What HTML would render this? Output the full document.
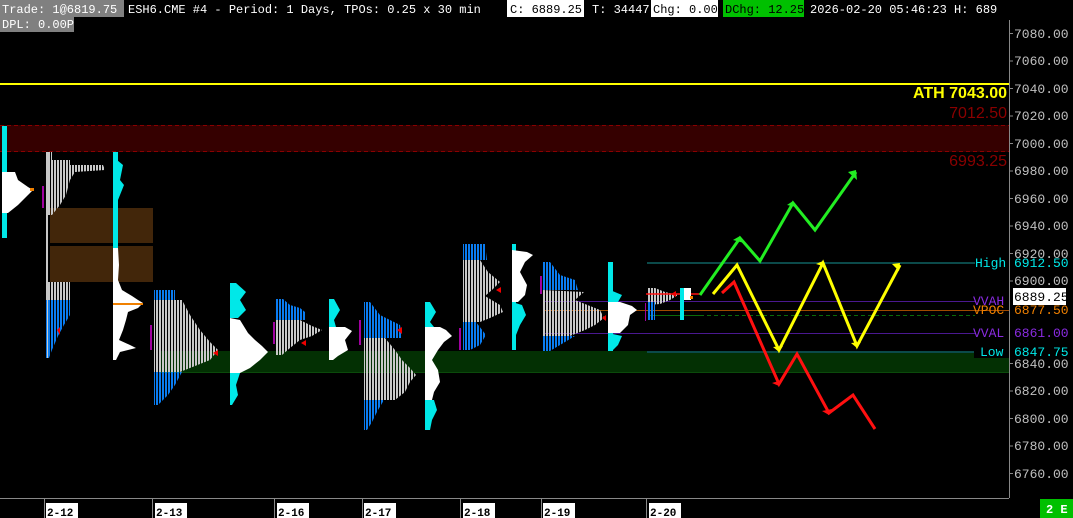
<!DOCTYPE html>
<html><head><meta charset="utf-8"><style>
html,body{margin:0;padding:0;background:#000;width:1073px;height:518px;overflow:hidden}
svg{display:block}
.m{font-family:"Liberation Mono",monospace;font-size:12px}
.a{font-family:"Liberation Mono",monospace;font-size:13px;fill:#c0c0c0}
.s{font-family:"Liberation Sans",sans-serif;font-size:16px}
</style></head><body>
<svg width="1073" height="518" viewBox="0 0 1073 518" xmlns="http://www.w3.org/2000/svg">
<defs>
<pattern id="g" width="3" height="10" patternUnits="userSpaceOnUse"><rect width="2" height="10" fill="#c8c8c8"/></pattern>
<pattern id="b" width="3" height="10" patternUnits="userSpaceOnUse"><rect width="2" height="10" fill="#0a7cf0"/></pattern>
</defs>
<rect width="1073" height="518" fill="#000"/>
<rect x="0" y="125" width="1009" height="27" fill="#350000"/>
<line x1="0" y1="125.5" x2="1009" y2="125.5" stroke="#8a0000" stroke-dasharray="4,3"/>
<line x1="0" y1="151.5" x2="1009" y2="151.5" stroke="#8a0000" stroke-dasharray="4,3"/>
<rect x="160" y="351" width="849" height="22" fill="#033003"/>
<line x1="160" y1="372.5" x2="1009" y2="372.5" stroke="#0b4a0b"/>
<rect x="50" y="208" width="103" height="35" fill="#42260a"/>
<rect x="50" y="246" width="103" height="36" fill="#42260a"/>
<line x1="0" y1="84" x2="1009" y2="84" stroke="#ffff00" stroke-width="2"/>
<line x1="647" y1="263" x2="975" y2="263" stroke="#0b4a4a" stroke-width="2"/>
<line x1="647" y1="352" x2="1009" y2="352" stroke="#0b4a4a" stroke-width="2"/>
<line x1="543" y1="301.5" x2="975" y2="301.5" stroke="#4a1890"/>
<line x1="543" y1="333.5" x2="975" y2="333.5" stroke="#4a1890"/>
<line x1="543" y1="310.5" x2="1009" y2="310.5" stroke="#a04a00"/>
<line x1="700" y1="315.5" x2="975" y2="315.5" stroke="#0a6a0a" stroke-dasharray="4,3"/>
<line x1="648" y1="315.5" x2="700" y2="315.5" stroke="#0a6a0a"/>
<rect x="2" y="126" width="5" height="112" fill="#00e8e8"/>
<polygon points="2,172 15,172 18,180 28,187 33,190 28,195 18,205 8,213 2,213" fill="#fff"/>
<rect x="30" y="188" width="4" height="3" fill="#f08000"/>
<rect x="46" y="152" width="2" height="206" fill="#c8c8c8"/>
<polygon points="46,152 52,152 52,160 70,160 70,165 103,165 105,170 75,172 70,180 66,195 60,205 52,215 46,215" fill="url(#g)"/>
<polygon points="46,282 70,282 70,300 46,300" fill="url(#g)"/>
<polygon points="46,300 70,300 70,315 64,325 58,336 52,350 49,358 46,358" fill="url(#b)"/>
<rect x="42" y="186" width="2" height="22" fill="#a000a0"/>
<polygon points="57,330 60,327 60,335" fill="#f00000"/>
<rect x="113" y="152" width="5" height="96" fill="#00e8e8"/>
<polygon points="117,160 123,165 120,180 124,185 118,200 115,210 117,220" fill="#00e8e8"/>
<polygon points="113,248 118,248 119,265 118,280 122,290 132,296 138,300 143,303 138,308 128,312 126,320 123,330 119,340 130,345 136,348 120,352 116,360 113,360" fill="#fff"/>
<line x1="113" y1="304" x2="143" y2="304" stroke="#f08000" stroke-width="2"/>
<polygon points="154,290 175,290 175,300 154,300" fill="url(#b)"/>
<polygon points="154,300 182,300 190,315 200,330 210,342 218,350 210,360 195,366 180,372 154,372" fill="url(#g)"/>
<polygon points="154,372 182,372 175,385 168,395 158,405 154,405" fill="url(#b)"/>
<rect x="150" y="325" width="2" height="25" fill="#a000a0"/>
<polygon points="213,353 218,350 218,356" fill="#f00000"/>
<polygon points="230,283 236,283 246,292 240,300 246,310 238,318 230,318" fill="#00e8e8"/>
<polygon points="230,318 240,320 248,333 255,340 262,346 268,352 260,360 250,368 240,373 230,373" fill="#fff"/>
<polygon points="230,373 240,373 236,385 238,395 232,405 230,405" fill="#00e8e8"/>
<polygon points="275,299 283,299 290,305 300,308 305,312 305,320 275,320" fill="url(#b)"/>
<polygon points="275,320 300,320 312,326 322,330 312,336 300,340 290,348 282,355 275,355" fill="url(#g)"/>
<rect x="273" y="322" width="2" height="22" fill="#a000a0"/>
<polygon points="301,343 306,340 306,346" fill="#f00000"/>
<polygon points="329,299 334,299 340,310 334,320 336,327 329,327" fill="#00e8e8"/>
<polygon points="329,327 345,327 352,331 345,340 348,350 338,356 333,360 329,360" fill="#fff"/>
<polygon points="364,302 370,302 380,315 390,320 400,325 402,338 364,338" fill="url(#b)"/>
<polygon points="364,338 385,338 395,350 402,360 410,368 416,375 410,382 405,392 395,400 364,400" fill="url(#g)"/>
<polygon points="364,400 384,400 378,410 372,422 367,430 364,430" fill="url(#b)"/>
<rect x="359" y="320" width="2" height="25" fill="#a000a0"/>
<polygon points="397,330 402,327 402,334" fill="#f00000"/>
<polygon points="425,302 430,302 436,312 430,322 434,327 425,327" fill="#00e8e8"/>
<polygon points="425,327 440,327 446,330 452,336 444,342 438,350 432,360 438,370 440,382 434,392 432,400 425,400" fill="#fff"/>
<polygon points="425,400 434,400 437,410 432,420 430,430 425,430" fill="#00e8e8"/>
<polygon points="463,244 485,244 487,260 463,260" fill="url(#b)"/>
<polygon points="463,260 480,260 488,272 500,282 492,290 485,296 500,305 503,312 490,318 480,322 463,322" fill="url(#g)"/>
<polygon points="463,322 476,322 486,335 480,345 470,350 463,350" fill="url(#b)"/>
<rect x="459" y="328" width="2" height="22" fill="#a000a0"/>
<polygon points="496,290 501,287 501,293" fill="#f00000"/>
<rect x="512" y="244" width="4" height="106" fill="#00e8e8"/>
<polygon points="512,250 527,252 533,255 525,262 520,272 527,285 525,295 518,302 512,302" fill="#fff"/>
<polygon points="512,302 522,305 526,315 520,325 516,335 516,350 512,350" fill="#00e8e8"/>
<polygon points="543,262 550,262 560,275 575,280 578,290 543,290" fill="url(#b)"/>
<polygon points="543,290 584,292 575,300 585,304 600,310 604,318 595,325 585,330 570,336 543,336" fill="url(#g)"/>
<polygon points="543,336 575,336 565,342 550,351 543,351" fill="url(#b)"/>
<rect x="540" y="276" width="2" height="18" fill="#a000a0"/>
<polygon points="602,318 606,315 606,321" fill="#f00000"/>
<rect x="608" y="262" width="5" height="89" fill="#00e8e8"/>
<polygon points="610,290 622,295 618,302 610,302" fill="#00e8e8"/>
<polygon points="608,302 620,302 632,306 637,310 630,315 628,325 620,333 608,333" fill="#fff"/>
<polygon points="608,333 622,336 618,345 612,351 608,351" fill="#00e8e8"/>
<polygon points="648,288 655,288 665,292 678,295 670,300 660,304 648,305" fill="url(#g)"/>
<rect x="648" y="302" width="7" height="18" fill="url(#b)"/>
<rect x="645" y="303" width="1" height="18" fill="#a000a0"/>
<line x1="646" y1="294" x2="700" y2="294" stroke="#ff1010" stroke-width="1.5"/>
<polygon points="671,294 676,291 676,297" fill="#f00000"/>
<rect x="680" y="288" width="4" height="32" fill="#00e8e8"/>
<rect x="684" y="288" width="7" height="12" fill="#fff"/>
<rect x="690" y="296" width="3" height="3" fill="#f08000"/>
<g fill="none" stroke-width="3" stroke-linejoin="miter">
<polyline points="700,295 740,238 760,261 793,203 815,230 856,172" stroke="#22ee22"/>
<polyline points="713,294 737,265 779,350 823,263 857,346 900,265" stroke="#ffff00"/>
<polyline points="722,293 734,282 779,384 797,354 829,413 853,395 875,429" stroke="#ff1010"/>
</g>
<polygon points="856,170 848,172 857,180" fill="#22ee22"/>
<polygon points="740,236 733,240 744,243" fill="#22ee22"/>
<polygon points="793,201 787,205 797,207" fill="#22ee22"/>
<polygon points="900,263 892,264 899,271" fill="#ffff00"/>
<polygon points="823,261 816,264 826,267" fill="#ffff00"/>
<polygon points="779,352 773,347 783,346" fill="#ffff00"/>
<polygon points="857,348 851,343 861,342" fill="#ffff00"/>
<polygon points="779,386 772,383 782,380" fill="#ff1010"/>
<polygon points="829,415 822,411 832,409" fill="#ff1010"/>
<line x1="1009.5" y1="20" x2="1009.5" y2="498" stroke="#888"/>
<line x1="0" y1="498.5" x2="1009" y2="498.5" stroke="#888"/>
<g class="a">
<text x="1014" y="38">7080.00</text><text x="1014" y="65">7060.00</text><text x="1014" y="93">7040.00</text>
<text x="1014" y="120">7020.00</text><text x="1014" y="148">7000.00</text><text x="1014" y="175">6980.00</text>
<text x="1014" y="203">6960.00</text><text x="1014" y="230">6940.00</text><text x="1014" y="258">6920.00</text>
<text x="1014" y="285">6900.00</text><text x="1014" y="368">6840.00</text><text x="1014" y="395">6820.00</text>
<text x="1014" y="423">6800.00</text><text x="1014" y="450">6780.00</text><text x="1014" y="478">6760.00</text>
</g>
<g stroke="#888"><line x1="1010" y1="33.5" x2="1013" y2="33.5"/><line x1="1010" y1="61" x2="1013" y2="61"/><line x1="1010" y1="88.5" x2="1013" y2="88.5"/><line x1="1010" y1="116" x2="1013" y2="116"/><line x1="1010" y1="143.5" x2="1013" y2="143.5"/><line x1="1010" y1="171" x2="1013" y2="171"/><line x1="1010" y1="198.5" x2="1013" y2="198.5"/><line x1="1010" y1="226" x2="1013" y2="226"/><line x1="1010" y1="253.5" x2="1013" y2="253.5"/><line x1="1010" y1="281" x2="1013" y2="281"/><line x1="1010" y1="363.5" x2="1013" y2="363.5"/><line x1="1010" y1="391" x2="1013" y2="391"/><line x1="1010" y1="418.5" x2="1013" y2="418.5"/><line x1="1010" y1="446" x2="1013" y2="446"/><line x1="1010" y1="473.5" x2="1013" y2="473.5"/></g>
<text class="a" x="1014" y="267" style="fill:#00e8e8">6912.50</text>
<rect x="1013" y="288" width="53" height="17" fill="#fff"/>
<text class="a" x="1014" y="301" style="fill:#000">6889.25</text>
<text class="a" x="1014" y="314" style="fill:#f08000">6877.50</text>
<text class="a" x="1014" y="337" style="fill:#8a2be2">6861.00</text>
<text class="a" x="1014" y="356" style="fill:#00e8e8">6847.75</text>
<rect x="974" y="343" width="35" height="15" fill="#000"/>
<text class="a" x="975" y="267" style="fill:#00e8e8">High</text>
<text class="a" x="973" y="314" style="fill:#f08000">VPOC</text>
<text class="a" x="973" y="305" style="fill:#8a2be2">VVAH</text>
<text class="a" x="973" y="337" style="fill:#8a2be2">VVAL</text>
<text class="a" x="980" y="356" style="fill:#00e8e8">Low</text>
<text class="s" x="1007" y="98" text-anchor="end" fill="#ffff00" font-weight="bold">ATH  7043.00</text>
<text class="s" x="1007" y="118" text-anchor="end" fill="#8a0000">7012.50</text>
<text class="s" x="1007" y="166" text-anchor="end" fill="#8a0000">6993.25</text>
<rect x="0" y="0" width="124" height="17" fill="#808080"/>
<rect x="0" y="17" width="74" height="15" fill="#808080"/>
<rect x="507" y="0" width="77" height="17" fill="#fff"/>
<rect x="651" y="0" width="67" height="17" fill="#fff"/>
<rect x="723" y="0" width="81" height="17" fill="#00c000"/>
<g class="m" fill="#fff">
<text x="2" y="13">Trade: 1@6819.75</text>
<text x="128" y="13">ESH6.CME #4 - Period: 1 Days, TPOs: 0.25 x 30 min</text>
<text x="510" y="13" fill="#000">C: 6889.25</text>
<text x="592" y="13">T: 34447</text>
<text x="653" y="13" fill="#000">Chg: 0.00</text>
<text x="725" y="13" fill="#000">DChg: 12.25</text>
<text x="810" y="13">2026-02-20 05:46:23 H: 689</text>
<text x="2" y="28">DPL: 0.00P</text>
</g>
<g stroke="#888"><line x1="44.5" y1="498" x2="44.5" y2="518"/><line x1="152.5" y1="498" x2="152.5" y2="518"/><line x1="274.5" y1="498" x2="274.5" y2="518"/><line x1="362.5" y1="498" x2="362.5" y2="518"/><line x1="460.5" y1="498" x2="460.5" y2="518"/><line x1="541.5" y1="498" x2="541.5" y2="518"/><line x1="646.5" y1="498" x2="646.5" y2="518"/></g>
<g fill="#fff"><rect x="46" y="503" width="32" height="15"/><rect x="155" y="503" width="32" height="15"/><rect x="277" y="503" width="32" height="15"/><rect x="364" y="503" width="32" height="15"/><rect x="463" y="503" width="32" height="15"/><rect x="543" y="503" width="32" height="15"/><rect x="649" y="503" width="32" height="15"/></g>
<g class="m" fill="#000" font-weight="bold" style="font-size:11px">
<text x="47" y="516">2-12</text><text x="156" y="516">2-13</text><text x="278" y="516">2-16</text><text x="365" y="516">2-17</text><text x="464" y="516">2-18</text><text x="544" y="516">2-19</text><text x="650" y="516">2-20</text>
</g>
<rect x="1040" y="499" width="33" height="19" fill="#00c000"/>
<text class="m" x="1046" y="513" fill="#fff" font-weight="bold">2 E</text>
</svg>
</body></html>
